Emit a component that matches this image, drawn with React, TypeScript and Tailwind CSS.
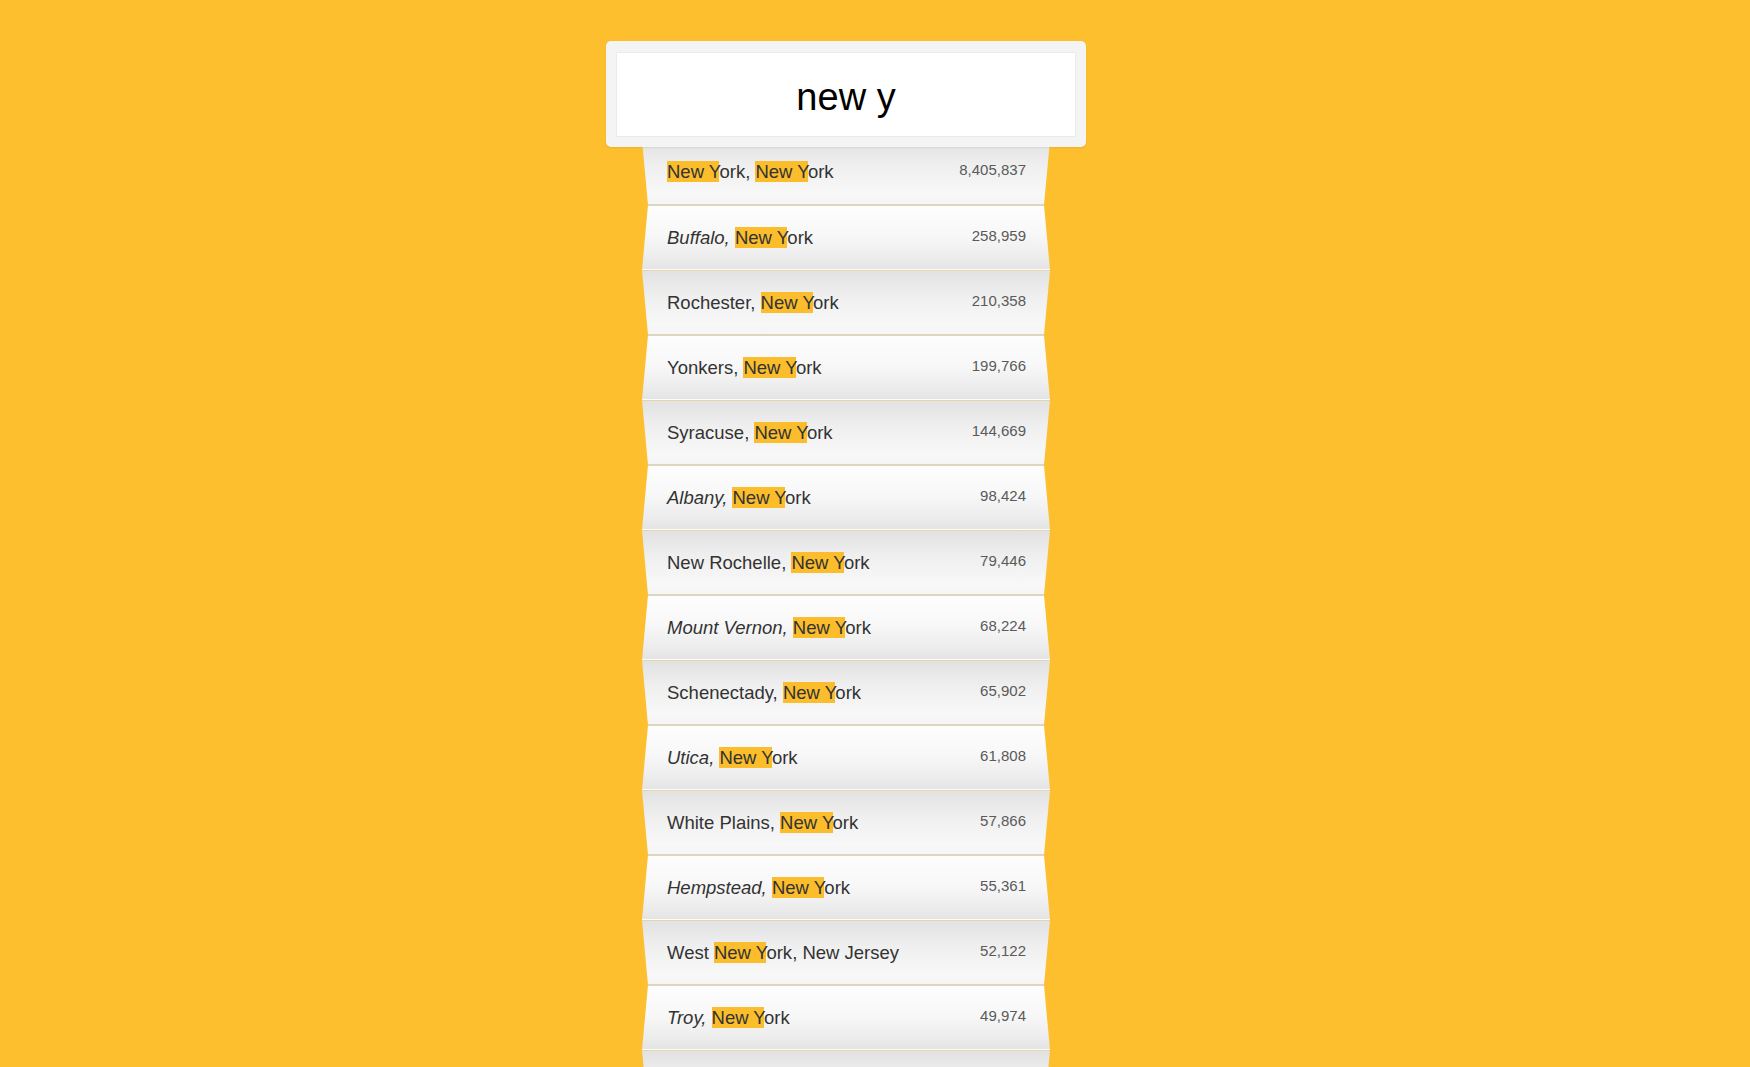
import clsx from "clsx"

type City = { city: string; state: string; pop: string; italic?: boolean }

const cities: City[] = [
  { city: "New York", state: "New York", pop: "8,405,837" },
  { city: "Buffalo", state: "New York", pop: "258,959", italic: true },
  { city: "Rochester", state: "New York", pop: "210,358" },
  { city: "Yonkers", state: "New York", pop: "199,766" },
  { city: "Syracuse", state: "New York", pop: "144,669" },
  { city: "Albany", state: "New York", pop: "98,424", italic: true },
  { city: "New Rochelle", state: "New York", pop: "79,446" },
  { city: "Mount Vernon", state: "New York", pop: "68,224", italic: true },
  { city: "Schenectady", state: "New York", pop: "65,902" },
  { city: "Utica", state: "New York", pop: "61,808", italic: true },
  { city: "White Plains", state: "New York", pop: "57,866" },
  { city: "Hempstead", state: "New York", pop: "55,361", italic: true },
  { city: "West New York", state: "New Jersey", pop: "52,122" },
  { city: "Troy", state: "New York", pop: "49,974", italic: true },
]

// wraps every "New Y" match in a yellow mark
const Highlight = ({ text }: { text: string }) => {
  const parts = text.split(/(New Y)/)
  return (
    <>
      {parts.map((p, i) =>
        p === "New Y" ? (
          <span key={i} className="bg-[#fbbd2b]">
            {p}
          </span>
        ) : (
          p
        )
      )}
    </>
  )
}

const rowShape = (index: number) =>
  clsx(
    "h-[65px] w-full flex items-center justify-between pl-[25px] pr-[24px] border-b",
    index > 0 && "border-t border-t-[#e6d5a6]",
    index % 2 === 0
      ? "[clip-path:polygon(0_0,100%_0,calc(100%_-_6px)_100%,6px_100%)] bg-[linear-gradient(to_bottom,#e2e2e2_0%,#efefef_40%,#f8f8f8_85%,#f5f5f5_100%)] border-b-[#d6d6d6]"
      : "[clip-path:polygon(6px_0,calc(100%_-_6px)_0,100%_100%,0_100%)] bg-[linear-gradient(to_bottom,#fdfdfd_0%,#f8f8f8_45%,#ededed_80%,#e4e4e4_100%)] border-b-[#fcfcfc]"
  )

const Row = ({ item, index }: { item: City; index: number }) => (
  <div className={rowShape(index)}>
    <span className="text-[18.5px] text-[#333] whitespace-nowrap">
      {item.italic ? (
        <em className="italic">
          <Highlight text={item.city} />,
        </em>
      ) : (
        <>
          <Highlight text={item.city} />,
        </>
      )}{" "}
      <Highlight text={item.state} />
    </span>
    <span className="text-[15px] text-[#5a5a5a] -mt-[3px]">{item.pop}</span>
  </div>
)

const App = () => {
  return (
    <div className="h-[1067px] overflow-hidden bg-[#fdbf2e] pt-[41px] [font-family:'Liberation_Sans',Arial,sans-serif]">
      <div className="ml-[606px] w-[480px] flex flex-col">
        <div className="relative z-10 h-[106px] rounded-[5px] bg-[#f4f4f4] px-[10px] pt-[11px] pb-[10px] shadow-[0_1px_2px_rgba(0,0,0,0.08)]">
          <div className="h-full border border-[#ebebeb] bg-white flex items-center justify-center pt-[6px]">
            <span className="text-[38px] text-black">new y</span>
          </div>
        </div>

        <div className="-mt-[7px] ml-[36px] w-[408px] flex flex-col">
          {cities.map((c, i) => (
            <Row key={c.city} item={c} index={i} />
          ))}
          {/* next row, cut off by the bottom of the window */}
          <div className={rowShape(cities.length)} />
        </div>
      </div>
    </div>
  )
}

export default App
